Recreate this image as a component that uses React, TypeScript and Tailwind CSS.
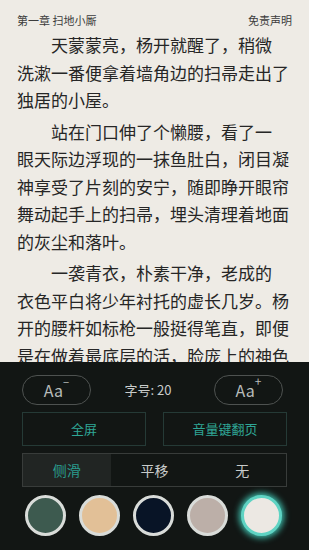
const paragraphs = [
  ["天蒙蒙亮，杨开就醒了，稍微", "洗漱一番便拿着墙角边的扫帚走出了", "独居的小屋。"],
  [
    "站在门口伸了个懒腰，看了一",
    "眼天际边浮现的一抹鱼肚白，闭目凝",
    "神享受了片刻的安宁，随即睁开眼帘",
    "舞动起手上的扫帚，埋头清理着地面",
    "的灰尘和落叶。",
  ],
  [
    "一袭青衣，朴素干净，老成的",
    "衣色平白将少年衬托的虚长几岁。杨",
    "开的腰杆如标枪一般挺得笔直，即便",
    "是在做着最底层的活，脸庞上的神色",
  ],
];

const swatches = [
  { color: "bg-[#3d5a4f]", active: false },
  { color: "bg-[#e2c097]", active: false },
  { color: "bg-[#081426]", active: false },
  { color: "bg-[#bcafa8]", active: false },
  { color: "bg-[#ece8e3]", active: true },
];

export default function App() {
  return (
    <div
      className="w-[309px] h-[550px] overflow-hidden bg-[#eeebe5] flex flex-col"
      style={{ fontFamily: '"Noto Sans CJK SC", "Noto Sans", sans-serif' }}
    >
      {/* Reading area */}
      <div className="h-[362px] overflow-hidden shrink-0">
        <div className="flex justify-between px-[17px] pt-[13px] text-[11px] leading-[14px] text-[#3c3c3c]">
          <span>第一章 扫地小厮</span>
          <span>免责声明</span>
        </div>
        <div className="mt-[4px] px-[17px] text-[17px] leading-[27.5px] text-[#262626]">
          {paragraphs.map((lines, p) => (
            <div key={p} className="mb-[4px]">
              {lines.map((line, i) => (
                <div
                  key={i}
                  className={`whitespace-nowrap ${i === 0 ? "pl-[34px]" : ""}`}
                >
                  {line}
                </div>
              ))}
            </div>
          ))}
        </div>
      </div>

      {/* Settings panel */}
      <div className="flex-1 bg-[#121614] px-[22px] pt-[13px]">
        <div className="flex items-center justify-between pr-[4px]">
          <button className="w-[69px] h-[30px] rounded-full border border-[#4e5250] text-[16px] text-[#b8bcba] flex items-center justify-center">
            Aa<sup className="text-[11px] -mt-[6px]">−</sup>
          </button>
          <span className="text-[13px] text-[#c9cccb] pr-[9px]">字号: 20</span>
          <button className="w-[69px] h-[30px] rounded-full border border-[#4e5250] text-[16px] text-[#b8bcba] flex items-center justify-center">
            Aa<sup className="text-[12px] -mt-[6px]">+</sup>
          </button>
        </div>

        <div className="mt-[7px] grid grid-cols-2 gap-[17px]">
          <div className="h-[34px] border border-[#253a36] flex items-center justify-center text-[13px] text-[#2fa696]">
            全屏
          </div>
          <div className="h-[34px] border border-[#253a36] flex items-center justify-center text-[13px] text-[#2fa696]">
            音量键翻页
          </div>
        </div>

        <div className="mt-[7px] h-[34px] border border-[#383c3a] grid grid-cols-3 text-[14px]">
          <div className="bg-[#212523] flex items-center justify-center text-[#2a9c8e]">侧滑</div>
          <div className="flex items-center justify-center text-[#c8cbca]">平移</div>
          <div className="flex items-center justify-center text-[#c8cbca]">无</div>
        </div>

        <div className="mt-[8px] flex gap-[13px] pl-[3px]">
          {swatches.map((s, i) => (
            <div
              key={i}
              className={`w-[41px] h-[41px] rounded-full ${s.color} ${
                s.active
                  ? "border-[3px] border-[#5fd3c3] shadow-[0_0_6px_2px_#3fbfae]"
                  : "border-[3px] border-[#d9dcd9]"
              }`}
            />
          ))}
        </div>
      </div>
    </div>
  );
}
